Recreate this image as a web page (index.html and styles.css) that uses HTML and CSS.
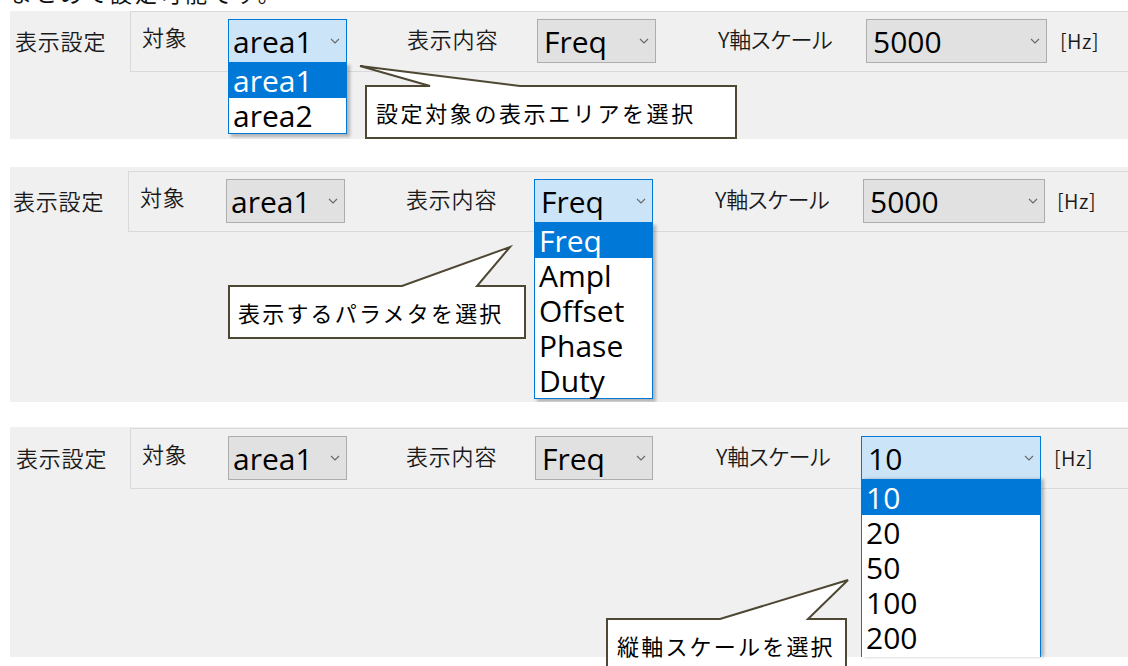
FILE: index.html
```html
<!DOCTYPE html>
<html lang="ja">
<head>
<meta charset="utf-8">
<title>表示設定</title>
<link rel="stylesheet" href="styles.css">
</head>
<body>
<div class="page">
  <div class="caption-clip"><p class="caption">まとめて設定可能です。</p></div>

  <section class="panel p1">
    <div class="row">
      <div class="title">表示設定</div>
      <div class="group">
        <span class="lbl lbl-target">対象</span>
        <div class="combo c-target focus">
          <span class="val">area1</span>
          <svg class="chev" viewBox="0 0 10 6"><polyline points="1,1 5,5 9,1"/></svg>
          <ul class="list">
            <li class="sel">area1</li>
            <li>area2</li>
          </ul>
        </div>
        <span class="lbl lbl-content">表示内容</span>
        <div class="combo c-content">
          <span class="val">Freq</span>
          <svg class="chev" viewBox="0 0 10 6"><polyline points="1,1 5,5 9,1"/></svg>
        </div>
        <span class="lbl lbl-scale">Y軸スケール</span>
        <div class="combo c-scale">
          <span class="val">5000</span>
          <svg class="chev" viewBox="0 0 10 6"><polyline points="1,1 5,5 9,1"/></svg>
        </div>
        <span class="unit">[Hz]</span>
      </div>
    </div>
    <div class="callout co1">
      <svg class="co-shape"><path d="M1 1 H65 L-5 -19 L155 1 H371 V53 H1 Z"/></svg>
      <span class="co-text">設定対象の表示エリアを選択</span>
    </div>
  </section>

  <section class="panel p2">
    <div class="row">
      <div class="title">表示設定</div>
      <div class="group">
        <span class="lbl lbl-target">対象</span>
        <div class="combo c-target">
          <span class="val">area1</span>
          <svg class="chev" viewBox="0 0 10 6"><polyline points="1,1 5,5 9,1"/></svg>
        </div>
        <span class="lbl lbl-content">表示内容</span>
        <div class="combo c-content focus">
          <span class="val">Freq</span>
          <svg class="chev" viewBox="0 0 10 6"><polyline points="1,1 5,5 9,1"/></svg>
          <ul class="list">
            <li class="sel">Freq</li>
            <li>Ampl</li>
            <li>Offset</li>
            <li>Phase</li>
            <li>Duty</li>
          </ul>
        </div>
        <span class="lbl lbl-scale">Y軸スケール</span>
        <div class="combo c-scale">
          <span class="val">5000</span>
          <svg class="chev" viewBox="0 0 10 6"><polyline points="1,1 5,5 9,1"/></svg>
        </div>
        <span class="unit">[Hz]</span>
      </div>
    </div>
    <div class="callout co2">
      <svg class="co-shape"><path d="M1 1 H174 L282 -38 L249 1 H297 V53 H1 Z"/></svg>
      <span class="co-text">表示するパラメタを選択</span>
    </div>
  </section>

  <section class="panel p3">
    <div class="row">
      <div class="title">表示設定</div>
      <div class="group">
        <span class="lbl lbl-target">対象</span>
        <div class="combo c-target">
          <span class="val">area1</span>
          <svg class="chev" viewBox="0 0 10 6"><polyline points="1,1 5,5 9,1"/></svg>
        </div>
        <span class="lbl lbl-content">表示内容</span>
        <div class="combo c-content">
          <span class="val">Freq</span>
          <svg class="chev" viewBox="0 0 10 6"><polyline points="1,1 5,5 9,1"/></svg>
        </div>
        <span class="lbl lbl-scale">Y軸スケール</span>
        <div class="combo c-scale focus">
          <span class="val">10</span>
          <svg class="chev" viewBox="0 0 10 6"><polyline points="1,1 5,5 9,1"/></svg>
          <ul class="list list-clip">
            <li class="sel">10</li>
            <li>20</li>
            <li>50</li>
            <li>100</li>
            <li>200</li>
          </ul>
        </div>
        <span class="unit">[Hz]</span>
      </div>
    </div>
    <div class="callout co3">
      <svg class="co-shape"><path d="M1 1 H114 L242 -38 L202 1 H240 V53 H1 Z"/></svg>
      <span class="co-text">縦軸スケールを選択</span>
    </div>
  </section>
</div>
</body>
</html>
```

FILE: styles.css
```css
html, body {
  margin: 0;
  padding: 0;
  background: #ffffff;
  overflow: hidden;
}

body {
  font-family: "Noto Sans CJK JP", "Noto Sans", sans-serif;
  color: #1a1a1a;
}

.page {
  width: 1128px;
  height: 666px;
  position: relative;
}

.caption-clip {
  height: 11px;
  overflow: hidden;
  padding-left: 10px;
}

.caption {
  margin: -19px 0 0;
  font-size: 22px;
  line-height: 22px;
  letter-spacing: 3px;
  color: #111;
  white-space: nowrap;
}

.panel {
  margin-left: 10px;
  background: #f0f0f0;
  position: relative;
  box-sizing: border-box;
}

.p1 {
  height: 128px;
  overflow: hidden;
}

.p2 {
  margin-top: 28px;
  height: 235px;
  padding-top: 4px;
  overflow: hidden;
}

.p2 .title {
  width: 115px;
  padding-left: 3px;
}

.p2 .lbl-content { margin-left: 61px; width: 128px; }
.p2 .lbl-scale { width: 148px; }
.p2 .c-scale { width: 182px; }
.p2 .unit { margin-left: 12px; }

.p3 {
  margin-top: 25px;
  height: 230px;
  padding-top: 1px;
}

.p3 .title {
  padding-left: 6px;
  width: 114px;
}

.p3 .lbl-content { margin-left: 59px; width: 129px; }
.p3 .c-content { width: 118px; }
.p3 .lbl-scale { margin-left: 63px; width: 145px; }
.p3 .c-scale { width: 180px; }

.row {
  display: flex;
  align-items: flex-start;
}

.title {
  width: 115px;
  flex: none;
  padding-left: 5px;
  padding-top: 18px;
  font-size: 22px;
  line-height: 22px;
  letter-spacing: 0.8px;
  white-space: nowrap;
  font-weight: 350;
}

.group {
  flex: 1;
  height: 61px;
  box-sizing: border-box;
  border: 1px solid #d9d9d9;
  border-right: none;
  display: flex;
  align-items: flex-start;
  padding-top: 7px;
}

.lbl {
  flex: none;
  font-size: 22px;
  line-height: 22px;
  padding-top: 8px;
  white-space: nowrap;
  letter-spacing: 0.8px;
  font-weight: 350;
}

.lbl-target {
  margin-left: 11px;
  width: 86px;
  padding-top: 6px;
}

.lbl-content {
  margin-left: 60px;
  width: 130px;
}

.lbl-scale {
  margin-left: 62px;
  width: 148px;
  letter-spacing: -0.3px;
  font-feature-settings: "palt";
}

.unit {
  flex: none;
  margin-left: 13px;
  padding-top: 12px;
  font-size: 20px;
  line-height: 20px;
  letter-spacing: 0.5px;
  font-weight: 350;
}

.combo {
  flex: none;
  position: relative;
  height: 44px;
  box-sizing: border-box;
  border: 1px solid #adadad;
  background: #e1e1e1;
  display: flex;
  align-items: flex-start;
  font-family: "Open Sans", "Noto Sans", sans-serif;
  font-size: 30px;
  color: #000;
}

.combo.focus {
  background: #cce4f7;
  border-color: #0078d7;
}

.c-target { width: 119px; }
.c-content { width: 119px; }
.c-scale { width: 181px; }

.val {
  padding-left: 4px;
  padding-top: 2px;
  line-height: 40px;
  white-space: nowrap;
}

.c-content .val,
.c-scale .val {
  padding-left: 6px;
}

.chev {
  width: 10px;
  height: 6px;
  margin-left: auto;
  margin-right: 6px;
  align-self: center;
  fill: none;
  stroke: #666;
  stroke-width: 1.1;
}

.list {
  position: absolute;
  left: -1px;
  top: 100%;
  margin: 0;
  padding: 0;
  list-style: none;
  width: 100%;
  box-sizing: content-box;
  border: 1px solid #0078d7;
  background: #fff;
  box-shadow: 3px 3px 3px rgba(0, 0, 0, 0.25);
  z-index: 2;
}

.list li {
  height: 35px;
  padding-top: 1px;
  box-sizing: border-box;
  line-height: 34px;
  padding-left: 4px;
  white-space: nowrap;
}

.list li.sel {
  background: #0078d7;
  color: #fff;
}

.list-clip {
  height: 177px;
  overflow: hidden;
  border-bottom: none;
  box-shadow: 3px 0 3px rgba(0, 0, 0, 0.25);
}

.callout {
  position: absolute;
  height: 54px;
  z-index: 3;
}

.co1 { left: 355px; top: 74px; width: 372px; }
.co2 { left: 218px; top: 118px; width: 298px; }
.co3 { left: 596px; top: 191px; width: 241px; }

.co-shape {
  position: absolute;
  left: 0;
  top: 0;
  width: 100%;
  height: 100%;
  overflow: visible;
}

.co-shape path {
  fill: #ffffff;
  stroke: #4d4733;
  stroke-width: 2;
  stroke-linejoin: miter;
}

.co-text {
  position: relative;
  display: block;
  padding-left: 11px;
  font-size: 22px;
  line-height: 54px;
  letter-spacing: 2.6px;
  color: #000;
  white-space: nowrap;
}

.co2 .co-text { padding-left: 10px; letter-spacing: 2.2px; }
.co3 .co-text { padding-left: 11px; letter-spacing: 2.2px; }
```
